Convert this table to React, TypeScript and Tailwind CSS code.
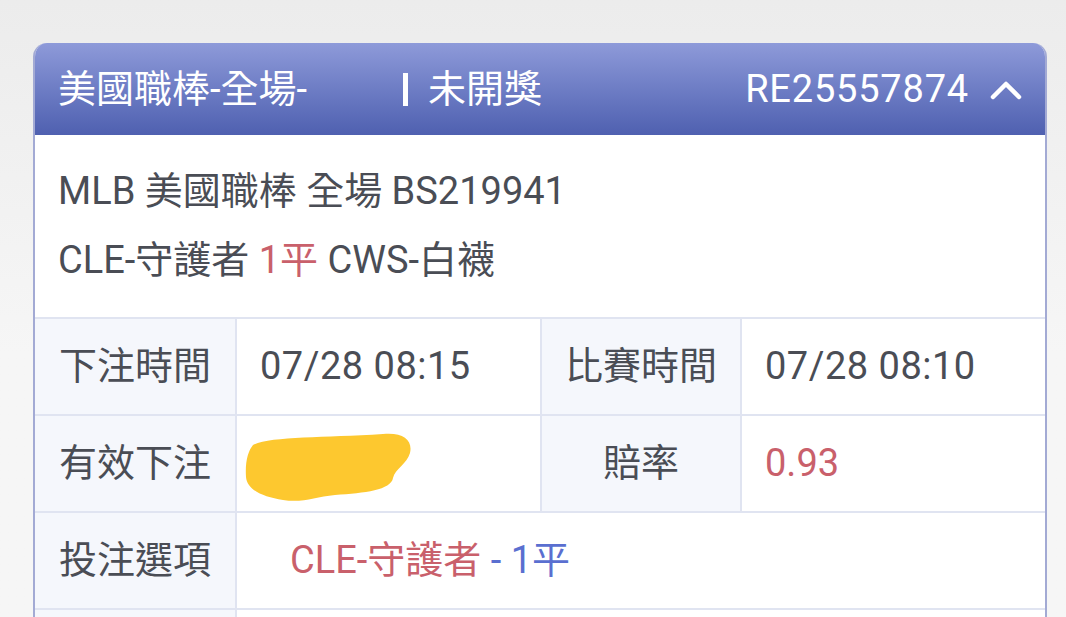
import React from "react";

const latin = "font-['Roboto','Noto_Sans_CJK_TC',sans-serif]";

function Label({ children }: { children: React.ReactNode }) {
  return (
    <div className="flex items-center justify-center bg-[#f5f7fc] text-[#4a4d55]">
      {children}
    </div>
  );
}

function Value({ children, className = "" }: { children: React.ReactNode; className?: string }) {
  return <div className={`flex items-center bg-white pl-[23px] ${className}`}>{children}</div>;
}

export default function App() {
  return (
    <div
      className={`min-h-[617px] w-[1066px] overflow-hidden bg-gradient-to-b from-[#ececec] via-[#f6f6f6] to-[#f6f6f6] pt-[43px] ${latin} text-[38px]`}
    >
      <div className="ml-[33px] w-[1014px] overflow-hidden rounded-t-[14px] border-x-2 border-[#a3aad4] bg-white">
        {/* header */}
        <div className="flex h-[92px] items-center bg-gradient-to-b from-[#8e9ad9] to-[#4f60b0] pl-[23px] pr-[22px] text-white">
          <div className="w-[345px] shrink-0">美國職棒-全場-</div>
          <div className="h-[33px] w-[5px] bg-white" />
          <div className="ml-[20px]">未開獎</div>
          <div className="ml-auto tracking-[0.8px]">RE25557874</div>
          <svg className="ml-[20px]" width="34" height="24" viewBox="0 0 34 24" fill="none">
            <path d="M4 20 L17 7 L30 20" stroke="white" strokeWidth="4.5" strokeLinecap="round" strokeLinejoin="round" />
          </svg>
        </div>

        {/* match info */}
        <div className="px-[23px] py-[22px] leading-[69px] text-[#4a4d55]">
          <div>MLB 美國職棒 全場 BS219941</div>
          <div>
            CLE-守護者 <span className="text-[#c9606b]">1平</span> CWS-白襪
          </div>
        </div>

        {/* detail table */}
        <div className="grid grid-cols-[200px_303px_198px_1fr] gap-[2px] border-t-2 border-[#e0e4f1] bg-[#e0e4f1]">
          <Label>下注時間</Label>
          <Value className="h-[95px] tracking-[0.5px] text-[#4a4d55]">07/28 08:15</Value>
          <Label>比賽時間</Label>
          <Value className="tracking-[0.5px] text-[#4a4d55]">07/28 08:10</Value>

          <Label>有效下注</Label>
          <div className="flex h-[95px] items-center bg-white pl-[6px]">
            <svg width="172" height="76" viewBox="0 0 172 76" className="mt-[10px]">
              <path
                d="M10 14 C28 5 80 7 140 3 C160 1 170 9 167 22 C164 33 152 38 150 47 C148 59 122 62 92 64 C72 66 60 72 40 69 C20 66 4 59 3 46 C2 31 5 20 10 14 Z"
                fill="#fdc82f"
              />
            </svg>
          </div>
          <Label>賠率</Label>
          <Value className="text-[#c9606b]">0.93</Value>

          <Label>投注選項</Label>
          <div className="col-span-3 flex h-[95px] items-center bg-white pl-[53px]">
            <span className="text-[#c9606b]">CLE-守護者</span>
            <span className="whitespace-pre text-[#5a6fd0]"> - 1平</span>
          </div>

          <Label>&nbsp;</Label>
          <div className="col-span-3 h-[95px] bg-white" />
        </div>
      </div>
    </div>
  );
}
